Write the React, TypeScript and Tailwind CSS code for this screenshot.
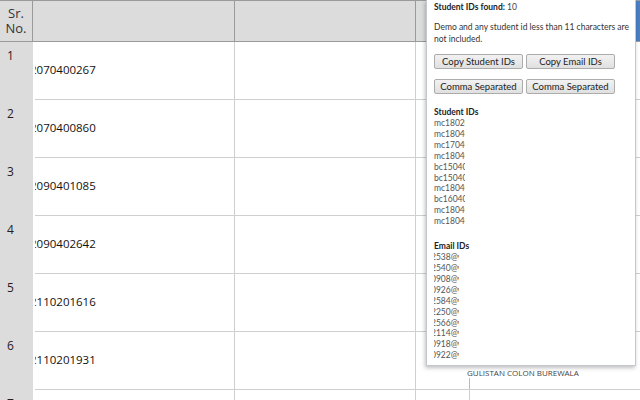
import React from 'react';

const rows = [
  { sr: 1, id: '2070400267' },
  { sr: 2, id: '2070400860' },
  { sr: 3, id: '2090401085' },
  { sr: 4, id: '2090402642' },
  { sr: 5, id: '2110201616' },
  { sr: 6, id: '2110201931' },
  { sr: 7, id: '' },
];

const studentIds = [
  'mc180200538',
  'mc180400540',
  'mc170400908',
  'mc180400926',
  'bc150400584',
  'bc150400250',
  'mc180400566',
  'bc160400114',
  'mc180400918',
  'mc180400922',
];

const emails = ['2538@', '2540@', '0908@', '0926@', '2584@', '2250@', '2566@', '2114@', '0918@', '0922@'];

function PopupButton({ children }: { children: React.ReactNode }) {
  return (
    <button className="h-[15px] w-[89px] rounded-[2px] border border-[#acacac] bg-gradient-to-b from-[#f2f2f2] to-[#e0e0e0] text-[9.5px] leading-none text-[#222]">
      {children}
    </button>
  );
}

export default function App() {
  return (
    <div className="relative h-[400px] w-[640px] overflow-hidden bg-white font-['Open_Sans',sans-serif] text-[#111]">
      {/* header */}
      <div className="flex h-[42px] border-t border-b border-[#9a9a9a] bg-[#dcdcdc]">
        <div className="flex w-[33px] flex-col items-center justify-center border-r border-[#9a9a9a] text-[13px] leading-[15px] text-[#333]">
          <span>Sr.</span>
          <span>No.</span>
        </div>
        <div className="w-[202px] border-r border-[#9a9a9a]" />
        <div className="w-[181px] border-r border-[#9a9a9a]" />
        <div className="w-[53px]" />
        <div className="flex-1 bg-[#4a7fc4]" />
      </div>

      {rows.map((r) => (
        <div key={r.sr} className="flex h-[58px]">
          <div className="w-[33px] shrink-0 bg-[#dcdcdc] pl-[7px] pt-[5px] text-[12px] text-[#2a1a22]">{r.sr}</div>
          <div className="flex w-[202px] shrink-0 border-r border-[#cfcfcf] pl-[2px]">
            <div className="min-w-0 flex-1 overflow-hidden border-b border-[#cfcfcf] pt-[20px]">
              <div className="ml-[-5px] whitespace-nowrap text-[11.5px] leading-[16px] text-[#111]">{r.id}</div>
            </div>
          </div>
          <div className="w-[181px] shrink-0 border-r border-b border-[#cfcfcf]" />
          <div className="w-[53px] shrink-0 border-b border-[#cfcfcf]" />
          {r.sr === 6 ? (
            <div className="flex flex-1 flex-col justify-end border-b border-[#cfcfcf]">
              <div className="-ml-[2px] whitespace-nowrap text-[8px] leading-[10px] text-[#444]">GULISTAN COLON BUREWALA</div>
              <div className="h-[11px] border-l border-[#bbb]" />
            </div>
          ) : (
            <div className="flex-1 border-l border-b border-[#cfcfcf]" />
          )}
        </div>
      ))}

      {/* extension popup */}
      <div className="absolute left-[426px] top-0 h-[366px] w-[210px] border border-t-0 border-[#c3c8cf] bg-white pl-[7px] font-['Lato',sans-serif] text-[8.5px] leading-[12px] text-[#222] shadow-[-1px_2px_4px_rgba(0,0,0,0.25)]">
        <div className="pt-[1px]">
          <span className="font-bold">Student IDs found:</span> <span className="text-[#444]">10</span>
        </div>
        <div className="mt-[8px] pr-[6px] text-[#333]">
          Demo and any student id less than 11 characters are not included.
        </div>
        <div className="mt-[9px] flex gap-[3px]">
          <PopupButton>Copy Student IDs</PopupButton>
          <PopupButton>Copy Email IDs</PopupButton>
        </div>
        <div className="mt-[10px] flex gap-[3px]">
          <PopupButton>Comma Separated</PopupButton>
          <PopupButton>Comma Separated</PopupButton>
        </div>
        <div className="mt-[12px] font-bold">Student IDs</div>
        <div className="w-[31px] overflow-hidden text-[#555]">
          {studentIds.map((s) => (
            <div key={s} className="whitespace-nowrap leading-[10.9px]">{s}</div>
          ))}
        </div>
        <div className="mt-[13px] font-bold">Email IDs</div>
        <div className="w-[25px] overflow-hidden text-[#555]">
          {emails.map((e, i) => (
            <div key={i} className="ml-[-3px] whitespace-nowrap leading-[10.9px]">{e}vu.edu.pk</div>
          ))}
        </div>
      </div>
    </div>
  );
}
